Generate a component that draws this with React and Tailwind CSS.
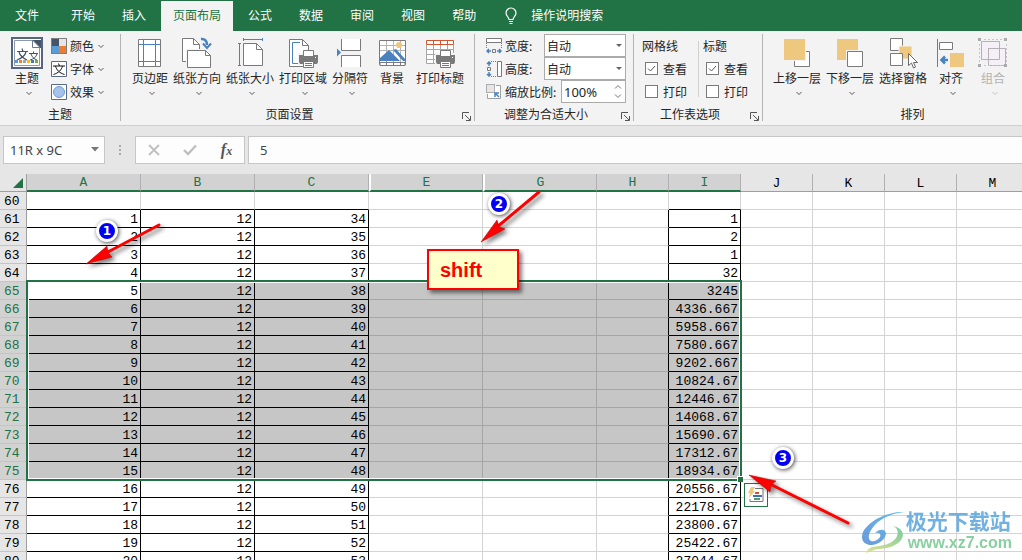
import React, { useState } from 'react';

const tabs = ['文件', '开始', '插入', '页面布局', '公式', '数据', '审阅', '视图', '帮助'];

const columns = [
    { name: 'A', width: 114, filled: true },
    { name: 'B', width: 114, filled: true },
    { name: 'C', width: 114, filled: true },
    { name: 'E', width: 114 },
    { name: 'G', width: 114 },
    { name: 'H', width: 72 },
    { name: 'I', width: 72, filled: true },
    { name: 'J', width: 72 },
    { name: 'K', width: 72 },
    { name: 'L', width: 72 },
    { name: 'M' },
];

const totals = [
    '1', '2', '1', '32', '3245', '4336.667', '5958.667', '7580.667', '9202.667', '10824.67',
    '12446.67', '14068.67', '15690.67', '17312.67', '18934.67', '20556.67', '22178.67', '23800.67',
    '25422.67', '27044.67',
];

const rows = [
    { number: 60, cells: {} },
    ...totals.map((total, i) => ({
        number: 61 + i,
        cells: { A: i + 1, B: 12, C: 34 + i, I: total },
    })),
];

const isSelectedRow = (n) => n >= 65 && n <= 75;
const isSelectedColumn = (name) => name <= 'I';

/* Icons */

const Chevron = ({ className = '' }) => (
    <svg width="8" height="6" viewBox="0 0 8 6" className={className} fill="none" stroke="currentColor" strokeOpacity=".75">
        <path d="M1.500 2 4 4.500 6.500 2" />
    </svg>
);

const LauncherIcon = () => (
    <svg width="9" height="9" viewBox="0 0 9 9" fill="none" stroke="#555">
        <path d="M.5 7V.5H7M3 3l5 5M8.500 4v4.500H4" />
    </svg>
);

const ThemeIcon = () => (
    <svg width="32" height="32" viewBox="0 0 32 32" fill="none">
        <path d="M1 1h30v30H1z" fill="#fff" stroke="#56657f" strokeWidth="2" />
        <path d="M3.500 3.500h25v25h-25z" fill="#fff" stroke="#8d99ab" />
        <path d="M21 3h9v8h-1z" fill="#44546a" />
        <path d="M21.500 3v7.500H29z" stroke="#6b7a90" fill="#fff" />
        <path d="M6 14.500h11M11 11.500l1 3M8 15c1 4 4 6 8 8M15 15c-1 4-4 6-9 8" stroke="#44546a" strokeWidth="1.200" />
        <path d="M18 16.500h9M22.500 14.500v2M20 17c1 3 3 5 6 6M26 17c-1 3-3 5-7 6" stroke="#44546a" />
        <path d="M4 23h3v3H4z" fill="#5b9bd5" />
        <path d="M8 23h3v3H8z" fill="#ed7d31" />
        <path d="M12 23h3v3h-3z" fill="#a5a5a5" />
        <path d="M16 23h3v3h-3z" fill="#ffc000" />
        <path d="M20 23h3v3h-3z" fill="#4472c4" />
        <path d="M24 23h3v3h-3z" fill="#70ad47" />
    </svg>
);

const ColorsIcon = () => (
    <svg width="16" height="16" viewBox="0 0 16 16">
        <path d="M0 0h16v16H0z" fill="#7f7f7f" />
        <path d="M1 1h7v7H1z" fill="#44546a" />
        <path d="M8 1h7v7H8z" fill="#e7e6e6" />
        <path d="M1 8h7v7H1z" fill="#5b9bd5" />
        <path d="M8 8h7v7H8z" fill="#ed7d31" />
    </svg>
);

const FontsIcon = () => (
    <svg width="16" height="16" viewBox="0 0 16 16" fill="none">
        <path d="M.5.500h15v15H.5z" fill="#fff" stroke="#5a6a84" />
        <path d="M2 5h12M7.500 2.500 8.500 5M4.500 5c1 4 4 7 9 8.500M11.500 5c-1 4-4 7-9 8.500" stroke="#111" />
    </svg>
);

const EffectsIcon = () => (
    <svg width="16" height="16" viewBox="0 0 16 16">
        <path d="M.5.500h15v15H.5z" fill="#fff" stroke="#5a6a84" />
        <circle cx="8" cy="8" r="5.500" fill="#a3c3ea" stroke="#6f9bd4" />
    </svg>
);

const MarginsIcon = () => (
    <svg width="32" height="32" viewBox="0 0 32 32" fill="none">
        <path d="M4.500 2.500h22v27h-22z" fill="#fff" stroke="#7a7a7a" />
        <path d="M9.500 3v26M21.500 3v26M5 7.500h21M5 24.500h21" stroke="#4a82bd" />
    </svg>
);

const OrientationIcon = () => (
    <svg width="32" height="32" viewBox="0 0 32 32" fill="none">
        <path d="M1.500 24.500v-23h11l6 6v17z" fill="#fff" stroke="#7a7a7a" />
        <path d="M12.500 1.500v6h6" stroke="#7a7a7a" />
        <path d="M5 12h26v20H5z" fill="#f3f3f3" />
        <path d="M6.500 30.500h23v-12l-5-5h-18z" fill="#fff" stroke="#7a7a7a" />
        <path d="M24.500 13.500v5h5" stroke="#7a7a7a" />
        <path d="M20 2c4-.500 6 2 6 6" stroke="#4a82bd" strokeWidth="2.500" />
        <path d="M22 6.500 26 11l4-4.500" stroke="#4a82bd" strokeWidth="2" />
    </svg>
);

const SizeIcon = () => (
    <svg width="32" height="32" viewBox="0 0 32 32" fill="none">
        <path d="M9.500 28.500v-22h13l6 6v16z" fill="#fff" stroke="#7a7a7a" />
        <path d="M22.500 6.500v6h6" stroke="#7a7a7a" />
        <path d="M9 2.500h20M9.500 1v3M28.500 1v3M5.500 6v22M4 6.500h3M4 28.500h3" stroke="#4a82bd" />
    </svg>
);

const Printer = () => (
    <g>
        <path d="M11 16h20v12H11z" fill="#f3f3f3" />
        <path d="M12 18h19v7l-1 2H13l-1-2z" fill="#7a7a7a" />
        <path d="M16.500 13.500h10v6h-10z" fill="#fff" stroke="#7a7a7a" />
        <path d="M15 19h13v2H15z" fill="#7a7a7a" />
        <path d="M16.500 24.500h10v6h-10z" fill="#fff" stroke="#7a7a7a" />
        <path d="M18 26.500h7M18 28.500h7" stroke="#4a82bd" />
        <path d="M28 20h1v1h-1z" fill="#fff" />
    </g>
);

const PrintAreaIcon = () => (
    <svg width="32" height="32" viewBox="0 0 32 32" fill="none">
        <path d="M2.500 29.500v-27h13l6 6v21z" fill="#fff" stroke="#7a7a7a" />
        <path d="M15.500 2.500v6h6" stroke="#7a7a7a" />
        <path d="M13 5.500H5.500v21H11" stroke="#4a82bd" />
        <Printer />
    </svg>
);

const BreaksIcon = () => (
    <svg width="32" height="32" viewBox="0 0 32 32" fill="none">
        <path d="M7.500 2v11.500h19V2M7.500 30V18.500h19V30" fill="#fff" stroke="#7a7a7a" />
        <path d="M3 11.500v8l4-4z" fill="#4a82bd" />
    </svg>
);

const BackgroundIcon = () => (
    <svg width="32" height="32" viewBox="0 0 32 32" fill="none">
        <path d="M3.500 3.500h26v24h-26z" fill="#fff" stroke="#7a7a7a" />
        <path d="M10.500 4v23M17.500 4v23M24.500 4v23M4 8.500h25M4 13.500h25" stroke="#b5b5b5" />
        <circle cx="23" cy="8" r="3" fill="#edc57c" />
        <path d="M4 24v-3l9-8 11 11zM17 13l3-1 9 10v2h-2z" fill="#4a82bd" />
        <path d="M4 25.500h25v3H4zM10.500 26v3M17.500 26v3M24.500 26v3" fill="#fff" stroke="#7a7a7a" />
    </svg>
);

const PrintTitlesIcon = () => (
    <svg width="32" height="32" viewBox="0 0 32 32" fill="none">
        <path d="M2.500 3.500h27v23h-27z" fill="#fff" />
        <path d="M2.500 8v18.500H13M9.500 8v19M16.500 8v8M23.500 8v5M29.500 8v9M3 12.500h26M3 17.500h12M3 22.500h9" stroke="#a6a6a6" />
        <path d="M2.500 3.500h27v4h-27zM9.500 4v4M16.500 4v4M23.500 4v4" stroke="#d6532f" />
        <Printer />
    </svg>
);

const WidthIcon = () => (
    <svg width="16" height="16" viewBox="0 0 16 16" fill="none">
        <path d="M.5.500h15v4H.5z" fill="#fff" stroke="#7a7a7a" />
        <path d="M.5 5v5M15.500 5v5" stroke="#7a7a7a" strokeDasharray="1 1" />
        <path d="M6.500 11.500h3v3h-3z" stroke="#7a7a7a" />
        <path d="M5 13H1M3 11l-2 2 2 2M11 13h4M13 11l2 2-2 2" stroke="#4a82bd" strokeWidth="1.500" />
    </svg>
);

const HeightIcon = () => (
    <svg width="16" height="16" viewBox="0 0 16 16" fill="none">
        <path d="M11.500.500h4v15h-4z" fill="#fff" stroke="#7a7a7a" />
        <path d="M5 .5h6M5 15.500h6" stroke="#7a7a7a" strokeDasharray="1 1" />
        <path d="M1.500 6.500h3v3h-3z" stroke="#7a7a7a" />
        <path d="M3 5V1M1 3l2-2 2 2M3 11v4M1 13l2 2 2-2" stroke="#4a82bd" strokeWidth="1.500" />
    </svg>
);

const ScaleIcon = () => (
    <svg width="16" height="16" viewBox="0 0 16 16" fill="none">
        <path d="M10 1.500h4.500v13h-13V10" fill="#fff" stroke="#a0a0a0" />
        <path d="M.5.500h8v8h-8z" fill="#e6e6e6" stroke="#6a6a6a" strokeDasharray="1 1" />
        <path d="M13 13 9.500 9.500M9 13V9h4" stroke="#4a82bd" strokeWidth="1.500" />
    </svg>
);

const ForwardIcon = () => (
    <svg width="32" height="32" viewBox="0 0 32 32" fill="none">
        <path d="M13.500 14.500h15v15h-15z" fill="#fff" stroke="#7a7a7a" />
        <path d="M2 1h23v23H2z" fill="#f3f3f3" />
        <path d="M3 2h21v21H3z" fill="#edc87e" />
    </svg>
);

const BackwardIcon = () => (
    <svg width="32" height="32" viewBox="0 0 32 32" fill="none">
        <path d="M3 2h21v21H3z" fill="#edc87e" />
        <path d="M12 13h18v18H12z" fill="#f3f3f3" />
        <path d="M13.500 14.500h15v15h-15z" fill="#fff" stroke="#7a7a7a" />
    </svg>
);

const SelectionIcon = () => (
    <svg width="32" height="32" viewBox="0 0 32 32" fill="none">
        <path d="M3.500 1.500h12v12h-12z" fill="#fff" stroke="#7a7a7a" />
        <path d="M12 9h13v13H12z" fill="#edc87e" stroke="#f3f3f3" />
        <path d="M3.500 16.500h12v12h-12z" fill="#fff" stroke="#7a7a7a" />
        <path d="M21.500 16.500v12l3-2.500 2 5 2-1-2-4.500h4z" fill="#fff" stroke="#6a6a6a" />
    </svg>
);

const AlignIcon = () => (
    <svg width="32" height="32" viewBox="0 0 32 32" fill="none">
        <path d="M2.500 2v28" stroke="#7a7a7a" />
        <path d="M4.500 5.500h13v7h-13z" fill="#fff" stroke="#7a7a7a" />
        <path d="M15 16h14v14H15z" fill="#edc87e" />
        <path d="M13 23H6M10 19.500 6.500 23l3.500 3.500" stroke="#4a82bd" strokeWidth="2.500" />
    </svg>
);

const GroupIcon = () => (
    <svg width="32" height="32" viewBox="0 0 32 32" fill="none">
        <path d="M4.500 4.500h18v18h-18z" fill="#f5eff7" stroke="#b5b0b7" />
        <path d="M11.500 11.500h17v17h-17z" fill="#f5eff7" stroke="#b5b0b7" />
        <path d="M11.500 11.500h11v11h-11z" stroke="#b5b0b7" />
        <path d="M7 2.500h20M7 28.500h20M2.500 7v19M29.500 7v19" stroke="#c8c4ca" strokeDasharray="2 2" />
        <path d="M1 1h3v3H1zM27 1h3v3h-3zM1 27h3v3H1zM27 27h3v3h-3z" fill="#aaa" />
    </svg>
);

/* Ribbon parts */

const BigButton = ({ icon, label, menu = true, width = '', disabled = false }) => (
    <button
        disabled={disabled}
        className={`flex shrink-0 flex-col items-center pt-[3px] ${width} ${disabled ? 'text-[#b1b1b1]' : 'text-[#262626]'}`}
    >
        {icon}
        <span className="whitespace-nowrap leading-[18px]">{label}</span>
        {menu && <Chevron className="ml-1 mt-[3px]" />}
    </button>
);

const SmallButton = ({ icon, label }) => (
    <button className="flex h-[23px] items-center gap-[3px]">
        {icon}
        <span>{label}</span>
        <Chevron />
    </button>
);

const Group = ({ title, launcher = false, className = '', children }) => (
    <section className={`flex shrink-0 flex-col border-r border-[#b3b3b3] ${className}`}>
        <div className="flex flex-1">{children}</div>
        <div className="flex h-[14px] items-end">
            <h2 className="flex-1 text-center leading-[14px]">{title}</h2>
            {launcher && (
                <button aria-label={title} className="flex w-4 justify-center">
                    <LauncherIcon />
                </button>
            )}
        </div>
    </section>
);

const SizeSelect = ({ id, icon, label }) => (
    <div className="flex h-[23px] items-center gap-[3px]">
        {icon}
        <label htmlFor={id} className="flex-1">{label}</label>
        <div className="relative h-[23px] w-[82px]">
            <select id={id} className="h-full w-full appearance-none border border-[#ababab] bg-white pl-[2px]">
                <option>自动</option>
            </select>
            <svg width="6" height="3" viewBox="0 0 6 3" className="pointer-events-none absolute right-1 top-[10px]">
                <path d="M0 0h6L3 3z" fill="#666" />
            </svg>
        </div>
    </div>
);

const CheckOption = ({ label, initial }) => {
    const [checked, setChecked] = useState(initial);

    return (
        <label className="flex h-[23px] items-center gap-[5px] whitespace-nowrap pl-[3px]">
            <span className="relative flex h-[13px] w-[13px]">
                <input
                    type="checkbox"
                    checked={checked}
                    onChange={() => setChecked(!checked)}
                    className="h-full w-full appearance-none border border-[#7a7a7a] bg-white"
                />
                {checked && (
                    <svg viewBox="0 0 13 13" className="pointer-events-none absolute inset-0" fill="none" stroke="#555">
                        <path d="m3 6.500 2.500 2.500L10 4" />
                    </svg>
                )}
            </span>
            {label}
        </label>
    );
};

const Ribbon = () => (
    <div className="flex h-[95px] shrink-0 overflow-hidden border-b border-[#cfcfcf] bg-[#f3f3f3] pb-1 pt-[3px] text-[#262626]">
        <Group title="主题" className="w-[121px]">
            <div className="flex gap-2 pl-[11px]">
                <BigButton icon={<ThemeIcon />} label="主题" />
                <div>
                    <SmallButton icon={<ColorsIcon />} label="颜色" />
                    <SmallButton icon={<FontsIcon />} label="字体" />
                    <SmallButton icon={<EffectsIcon />} label="效果" />
                </div>
            </div>
        </Group>

        <Group title="页面设置" launcher className="w-[354px]">
            <div className="flex gap-[5px] pl-[11px]">
                <BigButton icon={<MarginsIcon />} label="页边距" />
                <BigButton icon={<OrientationIcon />} label="纸张方向" />
                <BigButton icon={<SizeIcon />} label="纸张大小" />
                <BigButton icon={<PrintAreaIcon />} label="打印区域" />
                <BigButton icon={<BreaksIcon />} label="分隔符" />
                <BigButton icon={<BackgroundIcon />} label="背景" menu={false} width="w-[38px]" />
                <BigButton icon={<PrintTitlesIcon />} label="打印标题" menu={false} />
            </div>
        </Group>

        <Group title="调整为合适大小" launcher className="w-[159px]">
            <div className="flex-1 pl-[11px] pr-[7px]">
                <SizeSelect id="page-width" icon={<WidthIcon />} label="宽度:" />
                <SizeSelect id="page-height" icon={<HeightIcon />} label="高度:" />
                <div className="flex h-[23px] items-center gap-[3px]">
                    <ScaleIcon />
                    <label htmlFor="page-scale" className="flex-1 whitespace-nowrap">缩放比例:</label>
                    <div className="relative h-[23px] w-[65px]">
                        <input
                            id="page-scale"
                            defaultValue="100%"
                            className="h-full w-full border border-[#ababab] bg-white pl-[2px] font-['Noto_Sans',sans-serif] text-[13px]"
                        />
                        <svg width="8" height="15" viewBox="0 0 8 15" className="absolute right-1 top-1" fill="none" stroke="#777">
                            <path d="M1 4.500 4 1.500l3 3M1 10.500l3 3 3-3" />
                        </svg>
                    </div>
                </div>
            </div>
        </Group>

        <Group title="工作表选项" launcher className="w-[129px]">
            <fieldset className="w-[57px] shrink-0 pl-2">
                <legend className="h-[23px] leading-[23px]">网格线</legend>
                <CheckOption label="查看" initial={true} />
                <CheckOption label="打印" initial={false} />
            </fieldset>
            <div className="ml-[7px] mt-[7px] h-14 w-px bg-[#d0d0d0]" />
            <fieldset className="shrink-0 pl-1">
                <legend className="h-[23px] leading-[23px]">标题</legend>
                <CheckOption label="查看" initial={true} />
                <CheckOption label="打印" initial={false} />
            </fieldset>
        </Group>

        <Group title="排列" className="w-[300px]">
            <div className="flex gap-[5px] pl-[10px]">
                <BigButton icon={<ForwardIcon />} label="上移一层" />
                <BigButton icon={<BackwardIcon />} label="下移一层" />
                <BigButton icon={<SelectionIcon />} label="选择窗格" menu={false} />
                <BigButton icon={<AlignIcon />} label="对齐" width="w-[38px]" />
                <BigButton icon={<GroupIcon />} label="组合" width="w-9" disabled />
            </div>
        </Group>
    </div>
);

const TabBar = () => (
    <nav className="flex h-[31px] shrink-0 gap-[3px] bg-[#217346] pl-[3px] pt-px text-white">
        {tabs.map((tab) => (
            <button
                key={tab}
                className={`px-3 pb-[2px] ${tab === '文件' ? 'mr-[5px]' : ''} ${tab === '页面布局' ? 'bg-[#f3f3f3] text-[#217346]' : ''}`}
            >
                {tab}
            </button>
        ))}
        <button className="flex items-center gap-3 px-3 pb-[2px]">
            <svg width="16" height="18" viewBox="0 0 16 18" fill="none" stroke="#fff" strokeWidth="1.200">
                <path d="M6 13.500c0-2-3-3.500-3-6.500a5 5 0 0 1 10 0c0 3-3 4.500-3 6.500zM6 15.500h4M6.500 17.500h3" />
            </svg>
            操作说明搜索
        </button>
    </nav>
);

const FormulaBar = () => (
    <div className="flex h-12 shrink-0 items-start bg-[#e6e6e6] pl-[3px] pt-[10px] font-['Noto_Sans',sans-serif] text-[13px] text-[#444]">
        <div className="relative h-7 w-[102px]">
            <input aria-label="名称框" defaultValue="11R x 9C" className="h-full w-full border border-[#c6c6c6] bg-[#fdfdfd] pl-[6px]" />
            <svg width="8" height="5" viewBox="0 0 8 5" className="pointer-events-none absolute right-[6px] top-[11px]">
                <path d="M0 0h8L4 4.500z" fill="#777" />
            </svg>
        </div>
        <svg width="30" height="28" viewBox="0 0 30 28" fill="#ababab">
            <path d="M14 9h2v2h-2zM14 13h2v2h-2zM14 17h2v2h-2z" />
        </svg>
        <div className="flex h-7 w-[110px] items-center justify-around border border-[#c6c6c6] bg-[#fdfdfd]">
            <button aria-label="取消">
                <svg width="12" height="12" viewBox="0 0 12 12" fill="none" stroke="#bfbfbf" strokeWidth="1.800">
                    <path d="m1 1 10 10M11 1 1 11" />
                </svg>
            </button>
            <button aria-label="输入">
                <svg width="14" height="12" viewBox="0 0 14 12" fill="none" stroke="#bfbfbf" strokeWidth="2.400">
                    <path d="m1 6 4 4 8-8.500" />
                </svg>
            </button>
            <button className="font-['Liberation_Serif',serif] text-base font-bold italic leading-4 text-[#555]">
                f<span className="text-xs">x</span>
            </button>
        </div>
        <input aria-label="编辑栏" defaultValue="5" className="ml-[3px] h-7 min-w-0 flex-1 border border-r-0 border-[#c6c6c6] bg-[#fdfdfd] pl-[11px]" />
    </div>
);

/* Sheet */

const cellClass = (row, column, index) => {
    const next = columns[index + 1];
    const hasData = row.number > 60;
    const selected = isSelectedRow(row.number) && isSelectedColumn(column.name);
    const active = row.number === 65 && column.name === 'A';
    const grid = selected ? 'border-b-[#a6a6a6]' : 'border-b-[#d4d4d4]';
    const gridRight = selected ? 'border-r-[#a6a6a6]' : 'border-r-[#d4d4d4]';
    const blackRight = hasData && (column.filled || (next && next.filled));

    return [
        'h-[18px] overflow-hidden border-b border-r p-0 pr-[2px] pt-[2px] text-right leading-[15px]',
        column.filled ? 'border-b-black' : grid,
        blackRight ? 'border-r-black' : gridRight,
        selected && !active ? 'bg-[#c6c6c6]' : 'bg-white',
    ].join(' ');
};

const Sheet = () => (
    <div className="relative min-h-0 flex-1 overflow-hidden bg-[#e6e6e6]">
        <table className="w-full min-w-[1029px] table-fixed border-separate border-spacing-0 font-['Liberation_Mono',monospace] text-[13px] text-black">
            <colgroup>
                <col className="w-[27px]" />
                {columns.map((column) => (
                    <col key={column.name} style={{ width: column.width }} />
                ))}
            </colgroup>
            <thead>
                <tr>
                    <th aria-label="全选" className="h-[18px] border-b border-r border-[#9f9f9f] p-0">
                        <svg width="10" height="10" viewBox="0 0 10 10" className="ml-auto mr-[3px]">
                            <path d="M10 0v10H0z" fill="#217346" />
                        </svg>
                    </th>
                    {columns.map(({ name }) => (
                        <th
                            key={name}
                            className={`h-[18px] border-r p-0 pt-[2px] font-normal leading-[14px] ${
                                isSelectedColumn(name)
                                    ? 'border-b-2 border-b-[#217346] border-r-[#b0b0b0] bg-[#d2d2d2] text-[#217346]'
                                    : 'border-b border-b-[#9f9f9f] border-r-[#b0b0b0]'
                            } ${name === 'E' || name === 'G' ? 'border-l-2 border-l-white' : ''}`}
                        >
                            {name}
                        </th>
                    ))}
                </tr>
            </thead>
            <tbody>
                {rows.map((row) => (
                    <tr key={row.number}>
                        <th
                            className={`h-[18px] border-b border-r border-b-[#c4c4c4] border-r-[#9f9f9f] p-0 pl-1 pt-[2px] text-left font-normal leading-[15px] ${
                                isSelectedRow(row.number) ? 'bg-[#d2d2d2] text-[#217346]' : ''
                            }`}
                        >
                            {row.number}
                        </th>
                        {columns.map((column, index) => (
                            <td key={column.name} className={cellClass(row, column, index)}>
                                {row.cells[column.name]}
                            </td>
                        ))}
                    </tr>
                ))}
            </tbody>
        </table>

        {/* Selection frame with its fill handle */}
        <div className="pointer-events-none absolute left-[26px] top-[106px] h-[201px] w-[716px] border-2 border-[#217346]">
            <div className="h-full border border-white" />
            <div className="absolute -bottom-[3px] -right-[3px] h-[6px] w-[6px] border-l border-t border-white bg-[#217346]" />
        </div>

        <button aria-label="快速分析" className="absolute left-[744px] top-[309px] h-6 w-6 border border-[#217346] bg-white">
            <svg width="22" height="22" viewBox="0 0 22 22" fill="none">
                <path d="M10 4.500h8v13H5V15" stroke="#777" />
                <path d="M10 9h4" stroke="#d6532f" strokeWidth="2" />
                <path d="M8 12h9" stroke="#3f6fb5" strokeWidth="2" />
                <path d="M9 15h6" stroke="#4f9a74" strokeWidth="2" />
                <path d="M6 3h4L8 7h2l-6 7 1-5H3z" fill="#edc87e" />
            </svg>
        </button>
    </div>
);

/* Step marks drawn over the sheet */

const Badge = ({ number, position }) => (
    <div
        className={`absolute flex h-[22px] w-[22px] items-center justify-center rounded-full border-[3px] border-white bg-[#0000f5] font-['DejaVu_Sans',sans-serif] text-xs font-bold text-white shadow-[1px_1px_4px_rgba(0,0,0,0.7)] ${position}`}
    >
        {number}
    </div>
);

const Arrows = () => (
    <svg width="1022" height="560" viewBox="0 0 1022 560" className="absolute left-0 top-0 drop-shadow-[3px_3px_2px_rgba(0,0,0,0.5)]">
        <g stroke="#f00" strokeWidth="3" strokeLinecap="round" fill="#f00">
            <path d="M159 225 106 253" />
            <path d="M539 192 497 227" />
            <path d="M848 523 772 485" />
        </g>
        <g fill="#f00" stroke="#b00000" strokeWidth=".5">
            <path d="M86 264 107 246l1 7 4 4z" />
            <path d="M481 242 497 220l2 7 6 2z" />
            <path d="M749 475 776 481l-5 4-1 7z" />
        </g>
    </svg>
);

const Watermark = () => (
    <div className="absolute bottom-[6px] right-[10px] flex items-center opacity-90">
        <svg width="44" height="44" viewBox="0 0 44 44">
            <defs>
                <linearGradient id="swirl-blue" x1="0" y1="1" x2="1" y2="0">
                    <stop offset="0" stopColor="#5b8fd8" />
                    <stop offset="1" stopColor="#55b8e8" />
                </linearGradient>
                <linearGradient id="swirl-green" x1="0" y1="1" x2="1" y2="0">
                    <stop offset="0" stopColor="#dede7c" />
                    <stop offset="1" stopColor="#6cc79a" />
                </linearGradient>
            </defs>
            <path d="M43 2C28 1 8 9 1 22c-3 8 1 13 9 13 8-1 13-6 14-11 0-5-6-6-11-1 5-1 6 1 5 4-2 3-6 5-9 4C4 28 8 19 16 12 24 6 32 3 43 2z" fill="url(#swirl-blue)" />
            <path d="M31 16c10 2 12 9 8 14-5 7-17 9-24 9l-11 4c1-3 3-5 6-6 10-1 20-3 24-9 3-5 2-10-3-12z" fill="url(#swirl-green)" />
        </svg>
        <div>
            <div className="text-[21px] font-bold leading-[23px] text-[#62a9de]">极光下载站</div>
            <div className="pl-[2px] font-['Liberation_Sans',sans-serif] text-base font-bold leading-[22px] text-[#7dcb97]">www.xz7.com</div>
        </div>
    </div>
);

const App = () => {
    return (
        <div className="relative flex h-screen flex-col overflow-hidden font-['Noto_Sans_CJK_SC',sans-serif] text-xs">
            <TabBar />
            <Ribbon />
            <FormulaBar />
            <Sheet />

            <div className="pointer-events-none absolute inset-0 overflow-hidden">
                <div className="absolute left-[427px] top-[249px] h-[41px] w-[92px] border-2 border-[#f00] bg-[#ffffcc] pl-[11px] font-['Liberation_Sans',sans-serif] text-xl font-bold leading-[38px] text-[#f00] shadow-[3px_3px_4px_rgba(0,0,0,0.5)]">
                    shift
                </div>
                <Arrows />
                <Badge number="1" position="left-[96px] top-[220px]" />
                <Badge number="2" position="left-[488px] top-[193px]" />
                <Badge number="3" position="left-[772px] top-[447px]" />
                <Watermark />
            </div>
        </div>
    );
};

export default App;
